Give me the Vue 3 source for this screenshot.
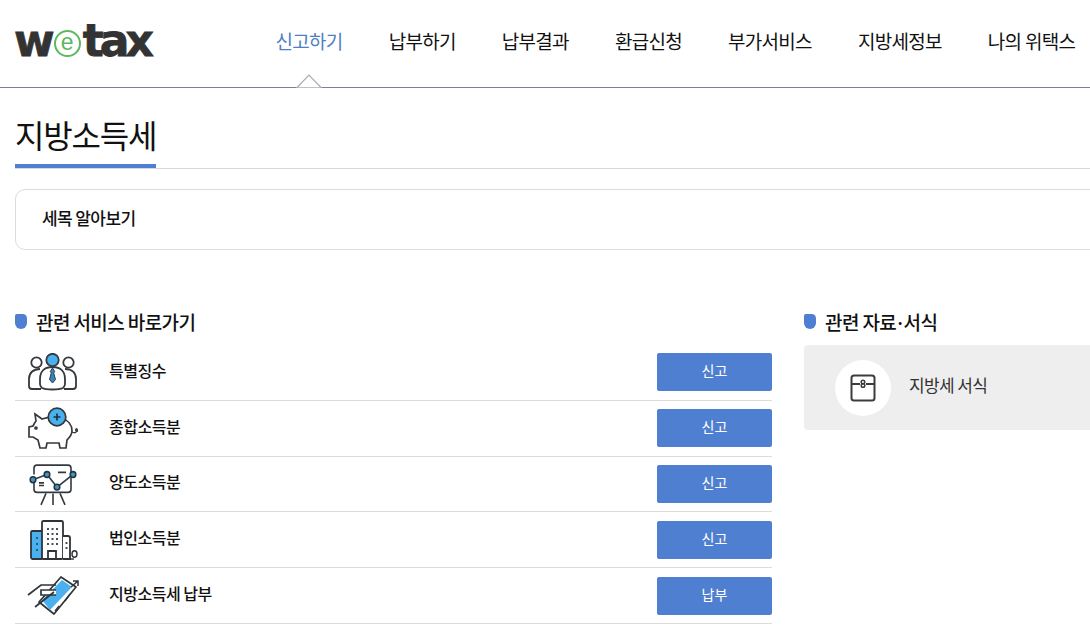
<script setup>
const navItems = ['신고하기', '납부하기', '납부결과', '환급신청', '부가서비스', '지방세정보', '나의 위택스']

const services = [
  { icon: 'people', name: '특별징수', action: '신고' },
  { icon: 'piggy', name: '종합소득분', action: '신고' },
  { icon: 'chart', name: '양도소득분', action: '신고' },
  { icon: 'building', name: '법인소득분', action: '신고' },
  { icon: 'card', name: '지방소득세 납부', action: '납부' }
]
</script>

<template>
  <div class="page">
    <header class="top">
      <div class="logo">
        <span>w</span>
        <span class="logo-e">e</span>
        <span>tax</span>
      </div>
      <nav class="nav">
        <a v-for="(item, i) in navItems" :key="item" :class="{ active: i === 0 }">{{ item }}</a>
      </nav>
      <svg class="caret" width="26" height="14" viewBox="0 0 26 14">
        <path d="M0 13.500H1L13 1l12 12.500h1" fill="#fff" stroke="#a8abb5" stroke-width="1.200" />
      </svg>
    </header>

    <main class="content">
      <div class="title-bar">
        <h1>지방소득세</h1>
      </div>
      <div class="about">세목 알아보기</div>

      <div class="columns">
        <section>
          <h2><i class="dot"></i>관련 서비스 바로가기</h2>
          <ul class="services">
            <li v-for="s in services" :key="s.name">
              <span class="ico">
                <svg v-if="s.icon === 'people'" width="52" height="38" viewBox="0 0 52 38" fill="none" stroke="#35393e" stroke-width="1.800">
                  <circle cx="9.500" cy="9.500" r="5.200" />
                  <circle cx="41.500" cy="9.500" r="5.200" />
                  <path d="M13 16C6 16 2 20 2 26v7c0 2 1 3 3 3h9" />
                  <path d="M38 16c7 0 11 4 11 10v7c0 2-1 3-3 3h-9" />
                  <path d="M15 35c-1-1-2-2-2-4v-5c0-8 5-12 12.500-12S38 18 38 26v5c0 2-1 3-2 4-4 2-17 2-21 0z" fill="#fff" />
                  <circle cx="25.500" cy="7" r="6.200" fill="#4ab0ee" />
                  <path d="M25.500 15l-2.200 3.500 1 1.500-1.800 6.500 3 3.500 3-3.500-1.800-6.500 1-1.500z" fill="#2f86c0" stroke-width="1" />
                </svg>
                <svg v-else-if="s.icon === 'piggy'" width="52" height="42" viewBox="0 0 52 42" fill="none" stroke="#35393e" stroke-width="1.700">
                  <path d="M8 7l7 5c6-2 14-3 20-1 6 2 10 7 10 13 0 4-3 7-5 9l-1 8h-6l-1-5H20l-1 5h-6l-2-8-5-3H2V20l4-1c1-2 2-4 3-5z" fill="#fff" />
                  <circle cx="9" cy="21" r="1" fill="#35393e" />
                  <path d="M45 25c2 1 4 1 5-1 1-1 0-3-1-2s0 3 2 2" stroke-width="1.300" />
                  <circle cx="30" cy="10" r="8.800" fill="#4ab0ee" />
                  <path d="M26.500 10h7M30 6.500v7" stroke="#1d3347" stroke-width="1.700" />
                </svg>
                <svg v-else-if="s.icon === 'chart'" class="chart" width="48" height="44" viewBox="0 0 48 42" preserveAspectRatio="none" fill="none" stroke="#35393e" stroke-width="1.600">
                  <path d="M5 11V5c0-2 1-3 3-3h31c2 0 3 1 3 3v4M42 14v11c0 2-1 3-3 3H8c-2 0-3-1-3-3v-6" />
                  <path d="M17 29l-5 11M24 29v11M31 29l5 11" />
                  <path d="M29 9h8M10 19h5M10 21.500h5" />
                  <path d="M4 16l14-5 10 12 16-12" stroke="#2f3f4c" />
                  <g fill="#4b93bd" stroke="#1f3444" stroke-width="1.500">
                    <circle cx="4" cy="16" r="2.800" />
                    <circle cx="18" cy="11" r="2.800" />
                    <circle cx="28" cy="23" r="2.800" />
                    <circle cx="44" cy="11" r="2.800" />
                  </g>
                </svg>
                <svg v-else-if="s.icon === 'building'" width="52" height="42" viewBox="-2 0 52 42" fill="none" stroke="#2f3439" stroke-width="1.800">
                  <rect x="2" y="12" width="12" height="28" rx="1.500" fill="#4ab0ee" />
                  <rect x="13" y="2" width="21" height="38" rx="1.500" fill="#fff" />
                  <path d="M34 17h5c1 0 2 1 2 2v21h-7" fill="#fff" />
                  <path d="M19 40v-8h8v8" />
                  <path d="M41 40h4" stroke-width="1.400" />
                  <ellipse cx="45.500" cy="35" rx="2.500" ry="3.200" stroke-width="1.400" />
                  <g stroke="none" fill="#4a4f55">
                    <rect x="18" y="9" width="2" height="2" /><rect x="22.500" y="9" width="2" height="2" /><rect x="27" y="9" width="2" height="2" />
                    <rect x="18" y="14" width="2" height="2" /><rect x="22.500" y="14" width="2" height="2" /><rect x="27" y="14" width="2" height="2" />
                    <rect x="18" y="19" width="2" height="2" /><rect x="22.500" y="19" width="2" height="2" /><rect x="27" y="19" width="2" height="2" />
                    <rect x="18" y="24" width="2" height="2" /><rect x="22.500" y="24" width="2" height="2" /><rect x="27" y="24" width="2" height="2" />
                    <rect x="36.500" y="23" width="2" height="2" /><rect x="36.500" y="28" width="2" height="2" />
                  </g>
                  <g stroke="none" fill="#1d5f8c">
                    <rect x="7" y="18" width="2" height="2" /><rect x="7" y="24" width="2" height="2" /><rect x="7" y="30" width="2" height="2" />
                  </g>
                </svg>
                <svg v-else width="52" height="40" viewBox="0 0 52 40" fill="none" stroke="#2f3439" stroke-width="1.700">
                  <path d="M34 1l15 10-22 27-15-12z" fill="#fff" stroke-linejoin="round" />
                  <path d="M15 24L35 4l10 7-22 23z" fill="#4ab0ee" stroke="none" />
                  <path d="M38 25l5-7M28 35l4-5" stroke-width="1.300" />
                  <path d="M1 19L14 9h15" fill="none" />
                  <path d="M29 14H14v5h15" fill="#fff" />
                  <path d="M8 31l19-15" />
                  <path d="M44 11l7-6M46 5h5v5" stroke-width="1.500" />
                </svg>
              </span>
              <span class="name">{{ s.name }}</span>
              <button class="btn" type="button">{{ s.action }}</button>
            </li>
          </ul>
        </section>

        <section>
          <h2><i class="dot"></i>관련 자료<span class="mid">·</span>서식</h2>
          <div class="forms">
            <span class="form-circle">
              <svg width="26" height="28" viewBox="0 0 26 28" fill="none" stroke="#3c3c3c" stroke-width="2">
                <rect x="1.500" y="1.500" width="23" height="25" rx="2.500" />
                <path d="M1.500 10H10M16 10h8.500" />
                <circle cx="13" cy="8" r="1.800" stroke-width="1.500" />
                <circle cx="13" cy="11.500" r="1.800" stroke-width="1.500" />
              </svg>
            </span>
            <span class="form-name">지방세 서식</span>
          </div>
        </section>
      </div>
    </main>
  </div>
</template>

<style>
html, body {
  margin: 0;
  overflow: hidden;
  background: #fff;
}
</style>

<style scoped>
.page {
  width: 1090px;
  overflow: hidden;
  font-family: "Noto Sans CJK KR", "Noto Sans", sans-serif;
  color: #111;
}

.top {
  position: relative;
  display: flex;
  align-items: center;
  height: 87px;
  border-bottom: 1px solid #7d8291;
  box-sizing: content-box;
}

.logo {
  display: flex;
  align-items: center;
  width: 261px;
  padding-left: 14px;
  box-sizing: border-box;
  font-family: "DejaVu Sans", sans-serif;
  font-weight: 700;
  font-size: 44px;
  letter-spacing: -4px;
  -webkit-text-stroke: 0.8px #333;
  color: #333;
  line-height: 1;
  margin-top: -5px;
}

.logo-e {
  flex: none;
  width: 27px;
  height: 27px;
  margin: 5px 2px 0 3px;
  border: 2px solid #5cb85c;
  border-radius: 50%;
  box-sizing: border-box;
  display: flex;
  align-items: center;
  justify-content: center;
  font-family: "Liberation Sans", sans-serif;
  font-weight: 400;
  font-size: 23px;
  letter-spacing: 0;
  -webkit-text-stroke: 0;
  color: #5cb85c;
  padding-bottom: 2px;
}

.nav {
  display: flex;
  gap: 46px;
  white-space: nowrap;
  margin-top: -7px;
  margin-left: 14.500px;
  font-size: 19px;
  letter-spacing: -0.7px;
  color: #111;
}

.nav .active {
  color: #4f7fc4;
}

.caret {
  position: absolute;
  left: 296px;
  top: 74px;
}

.content {
  padding-left: 15px;
}

.title-bar {
  height: 80px;
  border-bottom: 1px solid #d8d8d8;
  display: flex;
}

h1 {
  margin: 0;
  padding-top: 21px;
  height: 55px;
  width: 141px;
  border-bottom: 4px solid #4f7fd0;
  font-size: 32px;
  font-weight: 400;
  line-height: 50px;
  letter-spacing: -1.200px;
  color: #111;
  white-space: nowrap;
}

.about {
  margin-top: 20px;
  width: 1100px;
  height: 61px;
  box-sizing: border-box;
  padding-left: 26px;
  border: 1px solid #dcdcdc;
  border-radius: 10px;
  font-size: 17px;
  font-weight: 500;
  letter-spacing: -0.6px;
  line-height: 56px;
}

.columns {
  display: grid;
  grid-template-columns: 757px 320px;
  gap: 32px;
  margin-top: 59px;
}

h2 {
  display: flex;
  align-items: center;
  margin: 0;
  height: 36px;
  padding-bottom: 11px;
  box-sizing: border-box;
  font-size: 19px;
  font-weight: 500;
  letter-spacing: -0.6px;
  white-space: pre;
}

.mid {
  margin: 0 -1.500px;
}

.dot {
  width: 12px;
  height: 15px;
  margin-right: 9px;
  background: #4f7fd0;
  border-radius: 2px 5px 7px 7px;
}

.services {
  list-style: none;
  margin: 0;
  padding: 0;
}

.services li {
  display: flex;
  align-items: center;
  height: 55.800px;
  box-sizing: border-box;
  border-bottom: 1px solid #dcdcdc;
}

.ico {
  display: flex;
  align-items: center;
  justify-content: center;
  width: 76px;
  margin-right: 19px;
}

.chart {
  margin-top: 2px;
}

.name {
  flex: 1;
  font-size: 16px;
  font-weight: 500;
  letter-spacing: -0.5px;
  margin-top: -5px;
  margin-left: -1px;
}

.btn {
  width: 115px;
  height: 38px;
  border: 0;
  border-radius: 2px;
  background: #4f7fd0;
  color: #fff;
  font-family: inherit;
  font-size: 14px;
  padding: 0 0 4px;
}

.forms {
  display: flex;
  align-items: center;
  height: 85px;
  padding-left: 31px;
  border-radius: 4px;
  background: #eeeeee;
}

.form-circle {
  display: flex;
  align-items: center;
  justify-content: center;
  width: 56px;
  height: 56px;
  margin-right: 18px;
  border-radius: 50%;
  background: #fff;
}

.form-name {
  font-size: 17px;
  letter-spacing: -0.6px;
  color: #333;
  margin-top: -7px;
}
</style>
